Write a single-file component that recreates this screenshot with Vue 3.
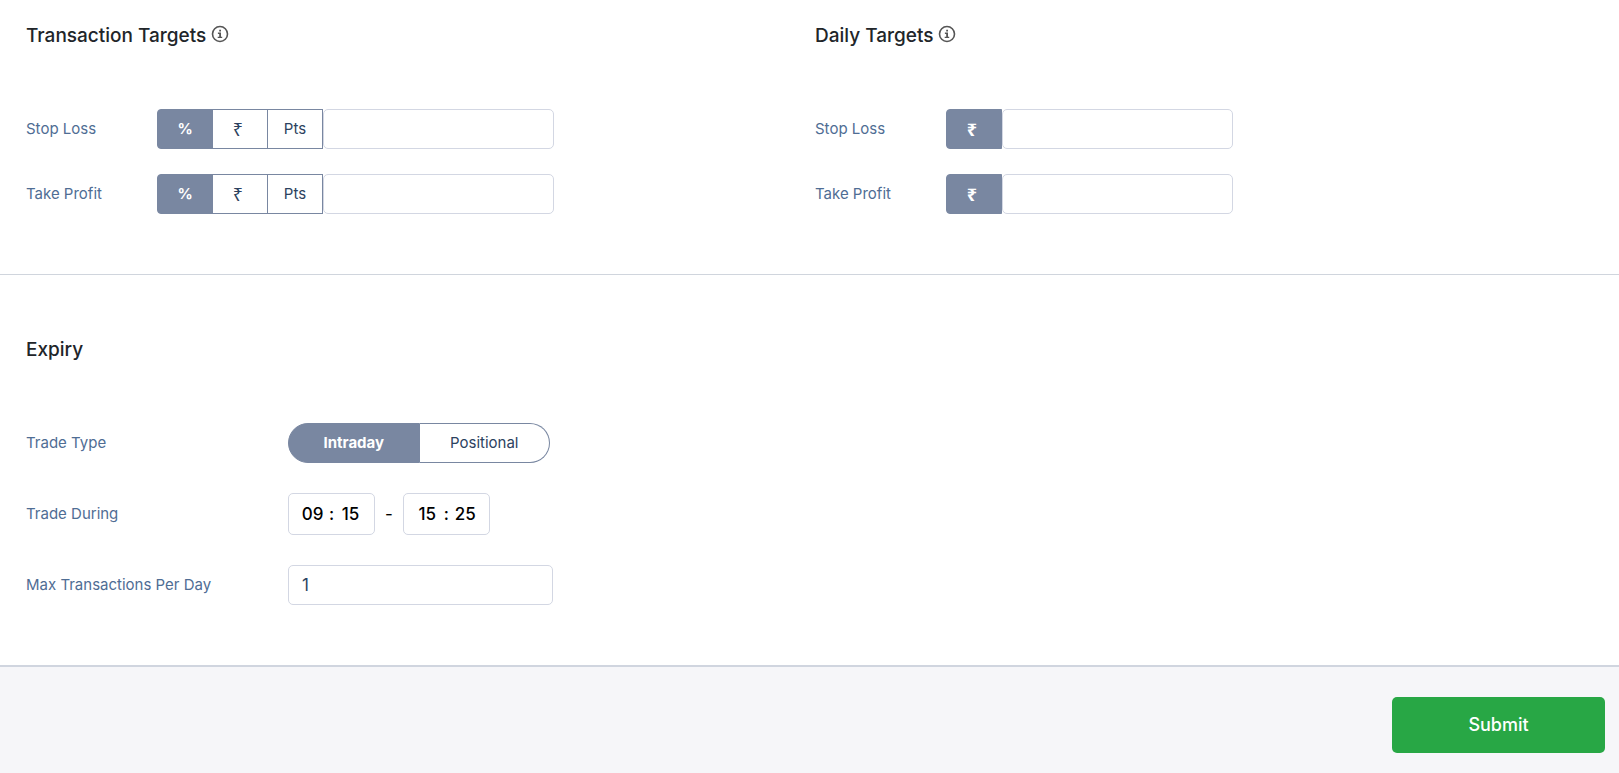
<script setup>
import { ref, reactive } from 'vue'

const groups = reactive([
  {
    id: 'transaction',
    title: 'Transaction Targets',
    rows: [
      { id: 'tx-stop', label: 'Stop Loss', units: ['%', '₹', 'Pts'], unit: '%', value: '' },
      { id: 'tx-profit', label: 'Take Profit', units: ['%', '₹', 'Pts'], unit: '%', value: '' },
    ],
  },
  {
    id: 'daily',
    title: 'Daily Targets',
    rows: [
      { id: 'day-stop', label: 'Stop Loss', units: ['₹'], unit: '₹', value: '' },
      { id: 'day-profit', label: 'Take Profit', units: ['₹'], unit: '₹', value: '' },
    ],
  },
])

const tradeTypes = ['Intraday', 'Positional']
const tradeType = ref('Intraday')
const start = reactive({ hour: '09', minute: '15' })
const end = reactive({ hour: '15', minute: '25' })
const maxTransactions = ref('1')
</script>

<template>
  <form class="page" @submit.prevent>
    <div class="targets">
      <section v-for="group in groups" :key="group.id">
        <h2 class="heading">
          {{ group.title }}
          <button type="button" class="info" :aria-label="'About ' + group.title">
            <svg viewBox="0 0 18 18" width="18" height="18" aria-hidden="true">
              <circle cx="9" cy="9" r="7.5" fill="none" stroke="currentColor" stroke-width="1.6" />
              <path d="M8.2 4.7h1.8v1.8H8.2zM6.9 7.6h3.1v4.1h1.2v1.3H6.7v-1.3h1.5V8.9H6.9z" fill="currentColor" />
            </svg>
          </button>
        </h2>
        <div class="target-rows">
          <div v-for="row in group.rows" :key="row.id" class="row">
            <label class="label" :for="row.id">{{ row.label }}</label>
            <div class="segments">
              <button
                v-for="unit in row.units"
                :key="unit"
                type="button"
                class="segment"
                :class="{ active: row.unit === unit, rupee: unit === '₹' }"
                :aria-pressed="row.unit === unit"
                @click="row.unit = unit"
              >{{ unit }}</button>
            </div>
            <input :id="row.id" v-model="row.value" class="field amount" type="text" />
          </div>
        </div>
      </section>
    </div>

    <section class="expiry">
      <h2 class="heading">Expiry</h2>
      <div class="expiry-rows">
        <div class="row wide">
          <span id="trade-type" class="label">Trade Type</span>
          <div class="pill" role="group" aria-labelledby="trade-type">
            <button
              v-for="type in tradeTypes"
              :key="type"
              type="button"
              class="choice"
              :class="{ active: tradeType === type }"
              :aria-pressed="tradeType === type"
              @click="tradeType = type"
            >{{ type }}</button>
          </div>
        </div>
        <div class="row wide">
          <label class="label" for="start-hour">Trade During</label>
          <div class="times">
            <div class="field time">
              <input id="start-hour" v-model="start.hour" class="digits" type="text" maxlength="2" />
              <span>:</span>
              <input v-model="start.minute" class="digits" type="text" maxlength="2" aria-label="Start minute" />
            </div>
            <span>-</span>
            <div class="field time">
              <input v-model="end.hour" class="digits" type="text" maxlength="2" aria-label="End hour" />
              <span>:</span>
              <input v-model="end.minute" class="digits" type="text" maxlength="2" aria-label="End minute" />
            </div>
          </div>
        </div>
        <div class="row wide">
          <label class="label" for="max-transactions">Max Transactions Per Day</label>
          <input id="max-transactions" v-model="maxTransactions" class="field count" type="text" />
        </div>
      </div>
    </section>

    <footer class="footer">
      <button type="submit" class="submit">Submit</button>
    </footer>
  </form>
</template>

<style>
body {
  margin: 0;
  background: #fff;
}
</style>

<style scoped>
.page {
  display: flex;
  flex-direction: column;
  min-height: 100vh;
  color: #212529;
  font-family: Inter, "Noto Sans", sans-serif;
  font-size: 15px;
  line-height: 20px;
}
.page *,
.page {
  box-sizing: border-box;
}
button,
input {
  margin: 0;
  font: inherit;
}
button {
  cursor: pointer;
}
.targets {
  display: grid;
  grid-template-columns: 1fr 1fr;
  padding: 24px 15px 60px 26px;
  border-bottom: 1px solid #d0d5dd;
}
.heading {
  display: flex;
  align-items: center;
  gap: 5px;
  margin: 0;
  color: #212529;
  font-size: 19px;
  font-weight: 500;
  line-height: 24px;
}
.info {
  display: flex;
  padding: 0 0 4px;
  border: 0;
  background: none;
  color: #555;
}
.target-rows {
  display: flex;
  flex-direction: column;
  gap: 25px;
  margin-top: 61px;
}
.row {
  display: flex;
  align-items: center;
}
.label {
  flex: 0 0 131px;
  color: #4f6d94;
}
.wide .label {
  flex-basis: 262px;
}
.segments {
  display: flex;
}
.segment {
  width: 56px;
  height: 40px;
  padding: 0;
  border: 1px solid #7987a1;
  background: #fff;
  color: #2c4260;
}
.segment + .segment {
  margin-left: -1px;
}
.segment:first-child {
  border-radius: 4px 0 0 4px;
}
.rupee {
  padding-right: 4px;
  font-family: "Noto Sans", sans-serif;
  font-size: 18px;
}
.active {
  background: #7987a1;
  color: #fff;
  font-weight: 700;
}
.field {
  height: 40px;
  padding: 0 13px;
  border: 1px solid #d3d7e3;
  border-radius: 5px;
  background: #fff;
  color: #2c4260;
  font-size: 17px;
  outline: none;
}
.amount {
  width: 231px;
}
.expiry {
  padding: 63px 26px 60px;
}
.expiry-rows {
  display: flex;
  flex-direction: column;
  gap: 30px;
  margin-top: 61px;
}
.pill {
  display: flex;
  width: 262px;
  height: 40px;
}
.choice {
  flex: 1;
  padding: 0;
  border: 1px solid #7987a1;
  border-radius: 0 20px 20px 0;
  background: #fff;
  color: #2c4260;
}
.choice:first-child {
  border-radius: 20px 0 0 20px;
}
.choice + .choice {
  border-left: 0;
}
.choice.active {
  background: #7987a1;
  color: #fff;
}
.times {
  display: flex;
  align-items: center;
  gap: 10px;
  color: #000;
  font-size: 17px;
}
.time {
  display: flex;
  align-items: center;
  justify-content: space-between;
  width: 87px;
  height: 42px;
  padding: 0 12px;
  color: #000;
  font-weight: 500;
}
.digits {
  width: 23px;
  padding: 0;
  border: 0;
  background: none;
  color: inherit;
  text-align: center;
  outline: none;
}
.count {
  width: 265px;
}
.footer {
  display: flex;
  flex: 1;
  align-items: flex-start;
  justify-content: flex-end;
  padding: 30px 14px 20px;
  border-top: 2px solid #d0d5df;
  background: #f6f6f9;
}
.submit {
  width: 213px;
  height: 56px;
  border: 0;
  border-radius: 5px;
  background: #28a745;
  color: #fff;
  font-size: 18px;
  font-weight: 500;
}
</style>
